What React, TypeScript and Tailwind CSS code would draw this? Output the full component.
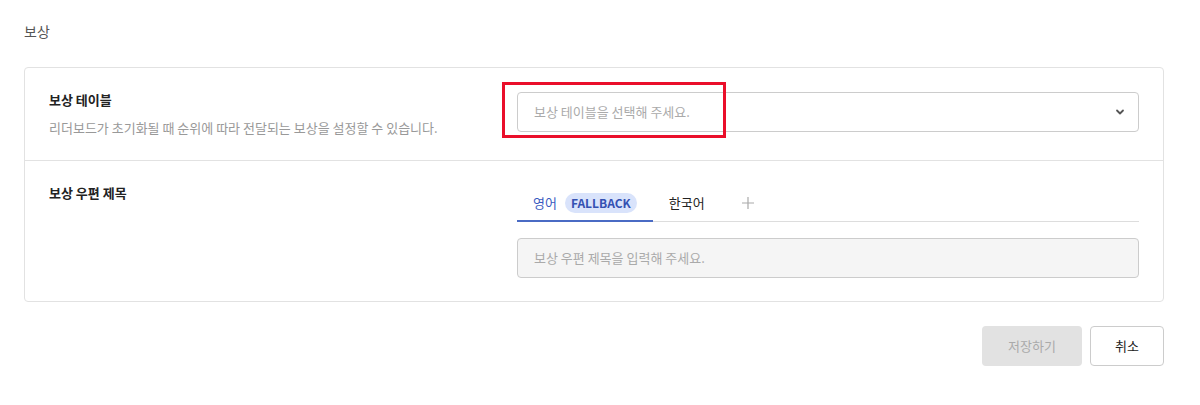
import React from 'react';

const font = { fontFamily: '"Noto Sans CJK KR", "Noto Sans", sans-serif' };

const App: React.FC = () => {
  return (
    <div className="w-[1200px] h-[405px] bg-white pl-6 pt-[20px] text-[13px]" style={font}>
      <div className="w-[1140px]">
        <h2 className="text-[14px] leading-[22px] text-[#555]">보상</h2>

        <div className="mt-[25px] border border-[#e2e2e2] rounded-[4px]">
          {/* reward table row */}
          <div className="flex pl-6 pr-6 pt-6 pb-6 border-b border-[#e2e2e2]">
            <div className="w-[468px]">
              <div className="font-bold text-[#222] leading-4">보상 테이블</div>
              <div className="mt-[12px] text-[#999] leading-4">리더보드가 초기화될 때 순위에 따라 전달되는 보상을 설정할 수 있습니다.</div>
            </div>
            <div className="flex-1 relative">
              <div className="h-10 border border-[#ccc] rounded-[4px] flex items-center justify-between pl-4 pr-3">
                <span className="text-[#aaa]">보상 테이블을 선택해 주세요.</span>
                <svg width="12" height="12" viewBox="0 0 12 12" fill="none">
                  <path d="M3 4.5L6 7.5L9 4.5" stroke="#555" strokeWidth="1.8" strokeLinecap="round" strokeLinejoin="round" />
                </svg>
              </div>
              {/* highlight annotation */}
              <div className="absolute left-[-15px] top-[-10px] w-[224px] h-[56px] border-[3px] border-[#ea0f2a] pointer-events-none" />
            </div>
          </div>

          {/* mail title row */}
          <div className="flex pl-6 pr-6 pt-6 pb-[23px]">
            <div className="w-[468px]">
              <div className="font-bold text-[#222] leading-4">보상 우편 제목</div>
            </div>
            <div className="flex-1">
              <div className="flex items-center border-b border-[#ddd] h-[37px]">
                <div className="h-full flex items-center gap-2 pl-4 pr-4 border-b-2 border-[#4a6bc4] mb-[-1px]">
                  <span className="text-[#3a5bbf]">영어</span>
                  <span className="px-[6px] h-5 leading-5 rounded-full bg-[#d9e3fb] text-[#3451b2] text-[12px] font-semibold">FALLBACK</span>
                </div>
                <div className="h-full flex items-center pl-4 pr-[20px] text-[#222]">한국어</div>
                <div className="h-full flex items-center px-4">
                  <svg width="14" height="14" viewBox="0 0 14 14" fill="none">
                    <path d="M7 1V13M1 7H13" stroke="#aaa" strokeWidth="1.2" />
                  </svg>
                </div>
              </div>
              <div className="mt-4 h-10 border border-[#ccc] rounded-[4px] bg-[#f5f5f5] flex items-center px-4 text-[#aaa]">
                보상 우편 제목을 입력해 주세요.
              </div>
            </div>
          </div>
        </div>

        <div className="flex justify-end gap-2 mt-6">
          <button className="w-[100px] h-10 rounded-[4px] bg-[#e2e2e2] text-[#aaa]">저장하기</button>
          <button className="w-[74px] h-10 rounded-[4px] border border-[#ccc] bg-white text-[#222]">취소</button>
        </div>
      </div>
    </div>
  );
};

export default App;
